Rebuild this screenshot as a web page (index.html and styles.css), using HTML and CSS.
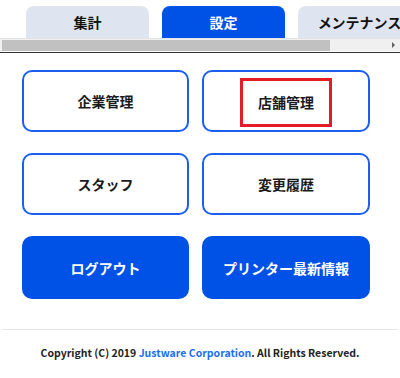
FILE: index.html
```html
<!DOCTYPE html>
<html lang="ja">
<head>
    <meta charset="UTF-8">
    <meta name="viewport" content="width=device-width, initial-scale=1.0">
    <title>設定</title>
    <link rel="stylesheet" href="styles.css">
</head>
<body>
    <div class="tab-area">
        <nav class="tabs">
            <a href="#" class="tab">集計</a>
            <a href="#" class="tab active">設定</a>
            <a href="#" class="tab">メンテナンス</a>
        </nav>
        <div class="scrollbar">
            <div class="thumb"></div>
            <div class="arrow"></div>
        </div>
    </div>

    <section class="menu">
        <a href="#" class="menu-btn">企業管理</a>
        <a href="#" class="menu-btn"><span class="mark">店舗管理</span></a>
        <a href="#" class="menu-btn">スタッフ</a>
        <a href="#" class="menu-btn">変更履歴</a>
        <a href="#" class="menu-btn solid">ログアウト</a>
        <a href="#" class="menu-btn solid">プリンター最新情報</a>
    </section>

    <footer>
        <p>Copyright (C) 2019 <a href="#">Justware Corporation</a>. All Rights Reserved.</p>
    </footer>
</body>
</html>
```

FILE: styles.css
```css
body {
    margin: 0;
    padding: 0;
    background-color: #fff;
    font-family: "Noto Sans CJK JP", "Noto Sans", sans-serif;
    color: #1a1a1a;
}

.tab-area {
    padding-top: 6px;
    border-bottom: 1px solid #333;
    padding-bottom: 1px;
    overflow: hidden;
}

.tabs {
    display: flex;
    gap: 13px;
    padding-left: 26px;
    white-space: nowrap;
}

.tab {
    flex: 0 0 123px;
    height: 32px;
    line-height: 32px;
    text-align: center;
    background-color: #dfe5f0;
    border-radius: 8px 8px 0 0;
    color: #111;
    font-weight: bold;
    font-size: 14px;
    text-decoration: none;
}

.tab.active {
    background-color: #0052e6;
    color: #fff;
}

/* fake horizontal scrollbar of the tab strip */
.scrollbar {
    display: flex;
    align-items: center;
    height: 12px;
    background-color: #f0f0f0;
    border-top: 1px solid #e4e4e4;
}

.thumb {
    margin-left: 2px;
    width: 328px;
    height: 11px;
    background-color: #c1c1c1;
}

.arrow {
    margin-left: auto;
    margin-right: 5px;
    width: 0;
    height: 0;
    border-top: 3px solid transparent;
    border-bottom: 3px solid transparent;
    border-left: 3px solid #606060;
}

.menu {
    display: grid;
    grid-template-columns: 167px 168px;
    column-gap: 13px;
    row-gap: 21px;
    padding: 17px 0 0 22px;
}

.menu-btn {
    box-sizing: border-box;
    height: 62px;
    display: flex;
    align-items: center;
    justify-content: center;
    border: 2px solid #1a5ff2;
    border-radius: 10px;
    background-color: #fff;
    color: #1a1a1a;
    font-weight: bold;
    font-size: 14px;
    text-decoration: none;
}

.menu-btn.solid {
    height: 63px;
    background-color: #0052e6;
    border-color: #0052e6;
    color: #fff;
}

.mark {
    display: inline-block;
    border: 3px solid #e31c25;
    padding: 12px 15px;
    margin-top: 2px;
    line-height: 19px;
}

footer {
    margin-top: 30px;
    border-top: 1px solid #e6e6e6;
    margin-left: 2px;
    margin-right: 2px;
}

footer p {
    margin: 15px 0 0;
    text-align: center;
    font-size: 10.5px;
    font-weight: bold;
    color: #222;
}

footer a {
    color: #1a6ef0;
    text-decoration: none;
}
```
